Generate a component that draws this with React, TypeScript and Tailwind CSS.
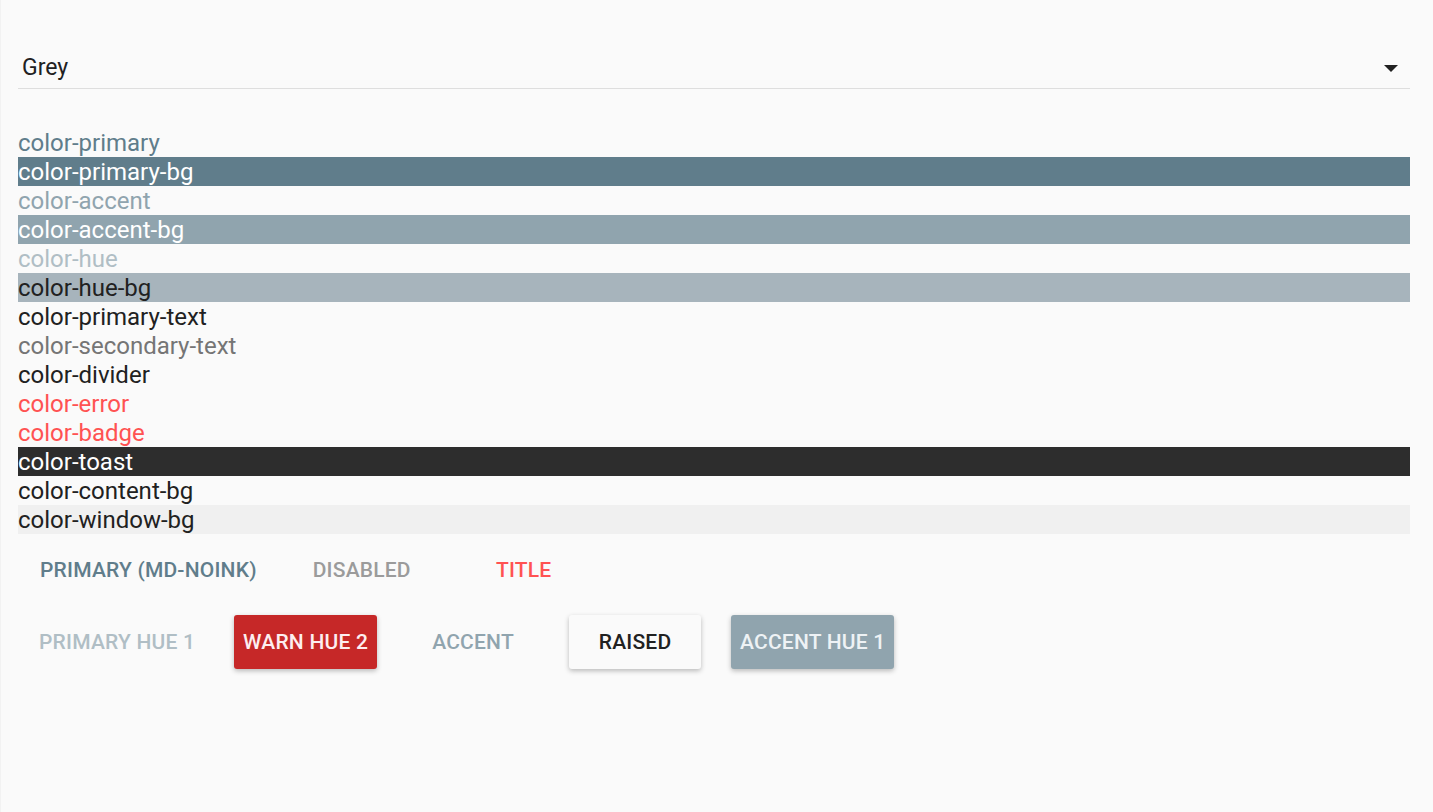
import React from "react";

const rows: { label: string; cls: string }[] = [
  { label: "color-primary", cls: "text-[#607d8b]" },
  { label: "color-primary-bg", cls: "bg-[#607d8b] text-white" },
  { label: "color-accent", cls: "text-[#90a4ae]" },
  { label: "color-accent-bg", cls: "bg-[#90a4ae] text-white" },
  { label: "color-hue", cls: "text-[#b0bec5]" },
  { label: "color-hue-bg", cls: "bg-[#a7b4bc] text-[#212121]" },
  { label: "color-primary-text", cls: "text-[#212121]" },
  { label: "color-secondary-text", cls: "text-[#757575]" },
  { label: "color-divider", cls: "text-[#212121]" },
  { label: "color-error", cls: "text-[#ff5252]" },
  { label: "color-badge", cls: "text-[#ff5252]" },
  { label: "color-toast", cls: "bg-[#2d2d2d] text-white" },
  { label: "color-content-bg", cls: "text-[#212121]" },
  { label: "color-window-bg", cls: "bg-[#f0f0f0] text-[#212121]" },
];

function Btn({ children, cls }: { children: React.ReactNode; cls: string }) {
  return (
    <button
      className={
        "h-[54px] min-w-[132px] px-[9px] pt-[2px] rounded-[3px] text-[21px] tracking-[0.2px] font-medium uppercase flex items-center justify-center whitespace-nowrap " +
        cls
      }
    >
      {children}
    </button>
  );
}

export default function App() {
  return (
    <div
      className="min-h-screen bg-[#fafafa] pl-[17px] pr-[23px] pt-[48px] border-l border-[#f2f2f2]"
      style={{ fontFamily: "Roboto, 'Liberation Sans', sans-serif" }}
    >
      <div className="h-[41px] flex items-center justify-between border-b border-[#dedede] pl-[4px] pr-[12px]">
        <span className="text-[23px] text-[#212121]">Grey</span>
        <svg width="14" height="7" viewBox="0 0 14 7">
          <path d="M0 0 L14 0 L7 7 Z" fill="#212121" />
        </svg>
      </div>

      <div className="mt-[39px] flex flex-col">
        {rows.map((r) => (
          <div key={r.label} className={"h-[29px] leading-[31px] overflow-hidden text-[24px] " + r.cls}>
            {r.label}
          </div>
        ))}
      </div>

      <div className="mt-[9px] ml-[13px] flex gap-[30px]">
        <Btn cls="text-[#607d8b]">Primary (md-noink)</Btn>
        <Btn cls="text-[#9b9b9b]">Disabled</Btn>
        <Btn cls="text-[#ff5252]">Title</Btn>
      </div>

      <div className="mt-[18px] ml-[12px] flex gap-[30px]">
        <Btn cls="text-[#b0bec5]">Primary Hue 1</Btn>
        <Btn cls="bg-[#c62828] text-[#fdeef0] shadow-[0_2px_5px_rgba(0,0,0,0.26)]">Warn Hue 2</Btn>
        <Btn cls="text-[#90a4ae]">Accent</Btn>
        <Btn cls="bg-[#fafafa] text-[#212121] shadow-[0_2px_5px_rgba(0,0,0,0.26)]">Raised</Btn>
        <Btn cls="bg-[#90a4ae] text-[#eef2f5] shadow-[0_2px_5px_rgba(0,0,0,0.26)]">Accent Hue 1</Btn>
      </div>
    </div>
  );
}
